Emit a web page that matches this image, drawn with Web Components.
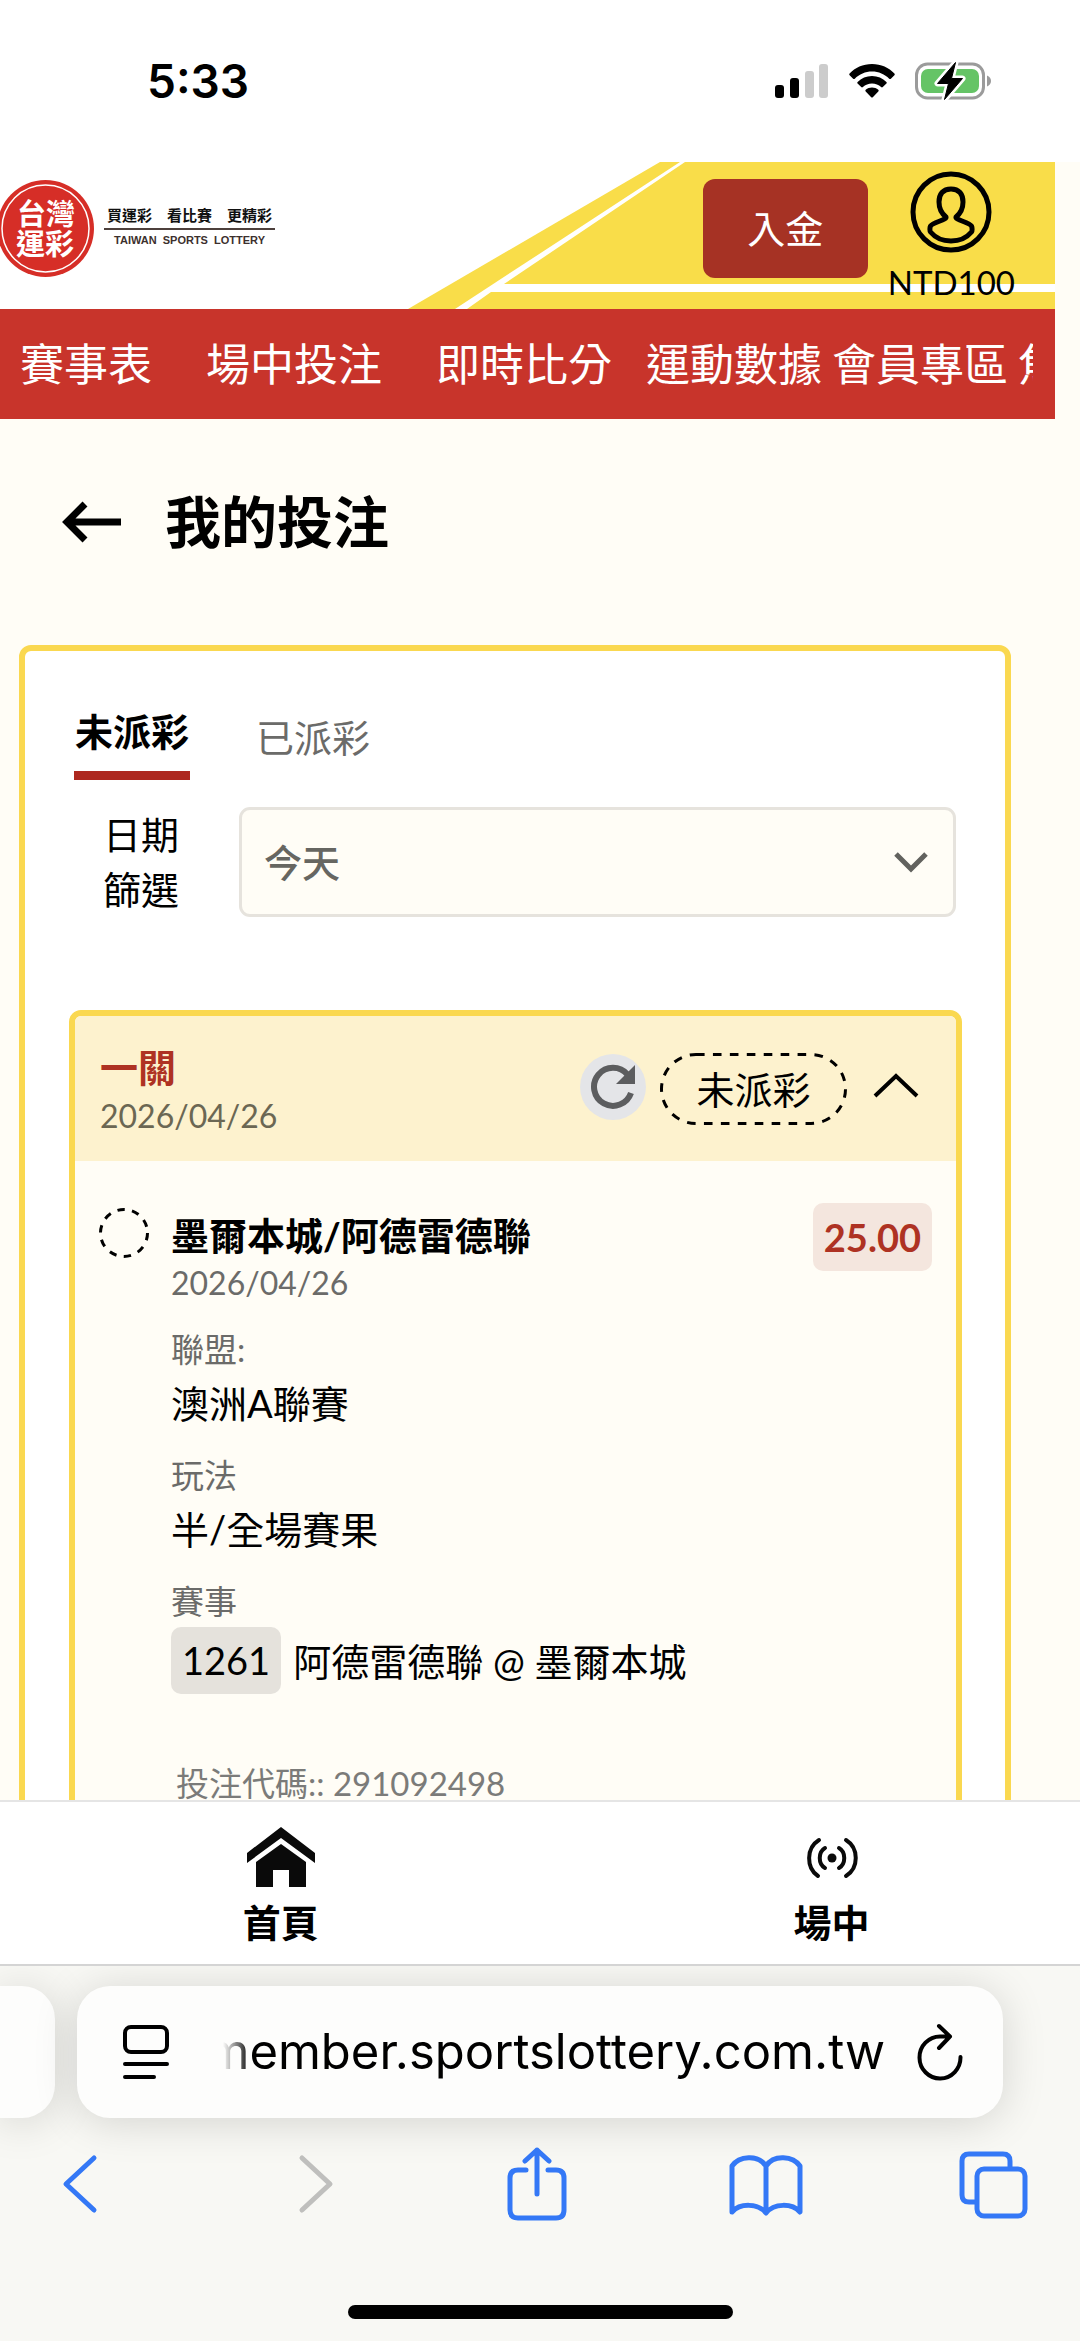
<!DOCTYPE html>
<html lang="zh-Hant">
<head>
<meta charset="utf-8">
<meta name="viewport" content="width=device-width, initial-scale=1">
<title>我的投注 - 台灣運彩</title>
<style>
  :root {
    --cream: #fffdf6;
    --gold: #fad850;
    --yellow: #f9dd49;
    --red: #c8342b;
    --brick: #a63224;
    --muted: #6b6b69;
    --blue: #3478f6;
    --text: 38px;
    --label: 33px;
    --date: 32px;
  }
  * { box-sizing: border-box; }
  body {
    margin: 0;
    height: 100vh;
    display: flex;
    flex-direction: column;
    overflow: hidden;
    background: var(--cream);
    color: #000;
    font-family: Lato, "Noto Sans CJK TC", sans-serif;
    font-size: var(--text);
  }
  main { flex: 1; min-height: 0; overflow: hidden; }
</style>
</head>
<body>
<status-bar time="5:33"></status-bar>
<main>
  <site-header balance="NTD100"></site-header>
  <site-nav></site-nav>
  <page-title>我的投注</page-title>
  <bets-panel>
    <bet-ticket name="一關" date="2026/04/26" status="未派彩">
      <bet-leg name="墨爾本城/阿德雷德聯" date="2026/04/26" odds="25.00">
        <bet-field label="聯盟:">澳洲A聯賽</bet-field>
        <bet-field label="玩法">半/全場賽果</bet-field>
        <bet-field label="賽事" code="1261">阿德雷德聯 @ 墨爾本城</bet-field>
      </bet-leg>
      <span slot="code">投注代碼:: 291092498</span>
    </bet-ticket>
  </bets-panel>
</main>
<tab-bar></tab-bar>
<browser-bar url="member.sportslottery.com.tw"></browser-bar>

<script>
const base = `<style>
  *, *::before { box-sizing: border-box; }
  button, select { font: inherit; color: inherit; background: none; border: 0; padding: 0; margin: 0; }
  a { color: inherit; text-decoration: none; }
  svg { display: block; flex: none; }
  h1, h2, h3, p, dl, dd, ul { margin: 0; padding: 0; font-weight: inherit; font-size: inherit; }
  ul { list-style: none; }
</style>`;

function define(name, render) {
  customElements.define(name, class extends HTMLElement {
    connectedCallback() {
      if (this.shadowRoot) return;
      this.attachShadow({ mode: 'open' }).innerHTML = base + render(this);
    }
  });
}

define('status-bar', el => `<style>
  :host { display: flex; align-items: center; justify-content: space-between; height: 162px; padding: 0 89px 0 147px;
    background: #fff; font-family: Inter, sans-serif; font-weight: 600; font-size: 46px; }
  .icons { display: flex; align-items: center; gap: 20px; }
</style>
<time>${el.getAttribute('time')}</time>
<div class="icons">
  <svg width="54" height="36" viewBox="0 0 54 36" aria-label="signal"><g>
    <rect x="0" y="22" width="9" height="13" rx="3"/><rect x="15" y="15" width="9" height="20" rx="3"/>
    <rect x="30" y="8" width="9" height="27" rx="3" fill="#ccc"/><rect x="44" y="1" width="9" height="34" rx="3" fill="#ccc"/></g></svg>
  <svg width="46" height="36" viewBox="0 0 46 36" aria-label="wifi">
    <path d="M23 1C14 1 6 4.600 0.600 10.500c-.5.500-.5 1.200 0 1.700l3.500 3.500c.5.500 1.200.5 1.700 0C10.300 11.200 16.300 8.500 23 8.500s12.700 2.700 17.200 7.200c.5.500 1.200.5 1.700 0l3.500-3.500c.5-.5.5-1.200 0-1.700C40 4.600 32 1 23 1z"/>
    <path d="M23 13c-5.600 0-10.700 2.200-14.400 5.900-.5.500-.5 1.200 0 1.700l3.600 3.500c.5.500 1.200.5 1.700 0 2.400-2.200 5.600-3.600 9.100-3.600s6.700 1.400 9.100 3.600c.5.500 1.200.5 1.700 0l3.600-3.500c.5-.5.5-1.200 0-1.700C33.700 15.200 28.600 13 23 13z"/>
    <path d="M23 24.500c-2.400 0-4.600.9-6.300 2.300-.5.500-.5 1.200 0 1.700l5.500 5.700c.5.500 1.100.5 1.600 0l5.500-5.700c.5-.5.5-1.200 0-1.700-1.700-1.400-3.900-2.300-6.300-2.300z"/></svg>
  <svg width="76" height="40" viewBox="0 0 76 40" aria-label="battery">
    <rect x="1.500" y="3" width="67" height="34" rx="11" fill="none" stroke="#9b9b9b" stroke-width="3"/>
    <rect x="6" y="8" width="58" height="24" rx="7" fill="#65c466"/>
    <path d="M72 14.500c2.600 1 4 3 4 5.500s-1.400 4.500-4 5.500z" fill="#9b9b9b"/>
    <path d="M40.500 1.500L22.500 22.500h11L29.500 38.500 47.500 17.500H36.500z" stroke="#fff" stroke-width="6" stroke-linejoin="round"/>
    <path d="M40.500 1.500L22.500 22.500h11L29.500 38.500 47.500 17.500H36.500z" stroke="#000" stroke-width="1" stroke-linejoin="round"/></svg>
</div>`);

define('site-header', el => `<style>
  :host { display: flex; justify-content: space-between; height: 147px; margin-right: 25px; background: #fff; position: relative; overflow: hidden; }
  .art { position: absolute; right: 0; top: 0; }
  .brand { display: flex; align-items: center; gap: 10px; margin: -14px 0 0 -3px; }
  .slogan { display: flex; flex-direction: column; align-items: center; color: #111; padding-bottom: 4px; }
  .zh { font-weight: 700; font-size: 15px; line-height: 26px; border-bottom: 2px solid #4d403c; padding: 0 3px; white-space: pre; }
  .en { font: 700 11px/21px "Liberation Sans", sans-serif; color: #3c302d; white-space: pre; }
  .account { position: relative; display: flex; align-items: flex-start; gap: 20px; padding-right: 40px; }
  .deposit { width: 165px; height: 99px; margin-top: 17px; padding-bottom: 4px; border-radius: 12px; background: var(--brick); color: #fff; }
  .user { display: flex; flex-direction: column; align-items: center; padding-top: 9px; gap: 8px; font-size: 33px; line-height: 42px; }
</style>
<svg class="art" width="647" height="147" viewBox="408 162 647 147" fill="#f9dd49" aria-hidden="true">
  <path d="M408 309L660 162h20L455 309z"/><path d="M685 162h370v122H504z"/><path d="M491 292h564v17H467z"/></svg>
<a class="brand" href="#" aria-label="台灣運彩">
  <svg width="97" height="97" viewBox="0 0 97 97" font-family="Noto Sans CJK TC, sans-serif" font-weight="700" font-size="29" fill="#fff">
    <circle cx="48.500" cy="48.500" r="48.500" fill="#d62e27"/>
    <circle cx="48.500" cy="48.500" r="43.500" fill="none" stroke="#fff" stroke-width="1.500"/>
    <text x="20" y="45">台灣</text><text x="19" y="75">運彩</text></svg>
  <span class="slogan"><span class="zh">買運彩　看比賽　更精彩</span><span class="en">TAIWAN  SPORTS  LOTTERY</span></span>
</a>
<div class="account">
  <button class="deposit">入金</button>
  <a class="user" href="#"><svg width="82" height="82" viewBox="0 0 82 82" fill="none" stroke="#000">
    <circle cx="41" cy="41" r="38" stroke-width="5"/>
    <path d="M36 46c-5-4-7-9-7-15 0-8 4-13 12-13s12 5 12 13c0 6-2 11-7 15-1 3 13 5 15.500 9 .8 1.500.8 5 0 6-5 6-12 9-20.500 9s-15.500-3-20.500-9c-.8-1-.8-4.500 0-6C23 51 37 49 36 46z" stroke-width="5" stroke-linejoin="round"/></svg>
    <span>${el.getAttribute('balance')}</span></a>
</div>`);

define('site-nav', () => `<style>
  :host { display: block; margin-right: 25px; padding: 0 22px 0 20px; background: var(--red); color: #fff; }
  ul { display: flex; overflow: hidden; gap: 10px; font-size: 44px; line-height: 110px; white-space: nowrap; }
  .wide { padding-right: 44px; }
  .mid { padding-right: 24px; }
</style>
<nav><ul>
  <li class="wide"><a href="#">賽事表</a></li><li class="wide"><a href="#">場中投注</a></li><li class="mid"><a href="#">即時比分</a></li>
  <li><a href="#">運動數據</a></li><li><a href="#">會員專區</a></li><li><a href="#">焦點</a></li>
</ul></nav>`);

define('page-title', () => `<style>
  :host { display: flex; align-items: center; gap: 43px; height: 206px; padding-left: 62px; }
  h1 { font-size: 56px; font-weight: 700; line-height: 80px; }
</style>
<button aria-label="返回"><svg width="60" height="42" viewBox="0 0 60 42" fill="none" stroke="#000" stroke-width="7">
  <path d="M59 21H6M23 3L5 21l18 18"/></svg></button>
<h1><slot></slot></h1>`);

define('bets-panel', () => `<style>
  :host { display: block; margin: 20px 69px 0 19px; border: 6px solid var(--gold); border-radius: 12px; background: #fff; padding: 50px 43px 60px 44px; }
  .tabs { display: flex; align-items: flex-start; gap: 66px; padding: 0 5px; }
  .tabs button { display: block; line-height: 60px; color: var(--muted); padding: 6px 0 0; }
  .tabs .on { color: #000; font-weight: 700; border-bottom: 9px solid #ad281f; padding: 0 1px 10px; }
  .filter { display: flex; align-items: center; gap: 60px; padding: 27px 6px 93px 34px; }
  label { width: 76px; line-height: 55px; text-align: right; flex: none; }
  .box { flex: 1; display: flex; align-items: center; position: relative; }
  select { appearance: none; width: 100%; height: 110px; border: 3px solid #e6e3dd; border-radius: 11px; background: var(--cream); padding: 0 22px; font-weight: 500; color: #666661; }
  .box svg { position: absolute; right: 27px; pointer-events: none; }
</style>
<div class="tabs" role="tablist"><button class="on" role="tab" aria-selected="true">未派彩</button><button role="tab" aria-selected="false">已派彩</button></div>
<div class="filter"><label for="d">日期篩選</label>
  <div class="box"><select id="d"><option>今天</option></select>
  <svg width="36" height="24" viewBox="0 0 36 24" fill="none" stroke="#62625e" stroke-width="5"><path d="M3 4l15 15L33 4"/></svg></div></div>
<slot></slot>`);

define('bet-ticket', el => `<style>
  :host { display: block; border: 6px solid var(--gold); border-radius: 12px; background: var(--cream); overflow: hidden; }
  header { display: flex; align-items: center; height: 145px; padding: 0 37px 0 25px; background: #fdf2ce; }
  .name { flex: 1; }
  h2 { font-weight: 700; line-height: 54px; color: #ae3223; }
  time { display: block; font-size: var(--date); line-height: 44px; color: #6b6753; }
  .refresh { width: 66px; height: 66px; border-radius: 50%; background: #e4e5e8; display: grid; place-items: center; margin: 0 14px 4px 0; }
  .status { position: relative; width: 187px; text-align: center; line-height: 72px; margin-right: 26px; }
  .status svg { position: absolute; inset: 0; }
  .fold { margin-bottom: 8px; }
  .code { padding: 64px 101px 40px; font-size: var(--label); line-height: 50px; color: #7b7b79; }
</style>
<header>
  <div class="name"><h2>${el.getAttribute('name')}</h2><time>${el.getAttribute('date')}</time></div>
  <button class="refresh" aria-label="重新整理"><svg width="46" height="46" viewBox="0 0 46 46">
    <path d="M37.500 10.500A19 19 0 1 0 41 29" fill="none" stroke="#5c5d5f" stroke-width="6"/><path d="M45 1v19H26z" fill="#5c5d5f"/></svg></button>
  <span class="status"><svg width="187" height="72" viewBox="0 0 187 72" fill="none" stroke="#000" stroke-width="3" aria-hidden="true">
    <rect x="1.500" y="1.500" width="184" height="69" rx="34.500" stroke-dasharray="8.600 8.330"/></svg>${el.getAttribute('status')}</span>
  <button class="fold" aria-label="收合"><svg width="46" height="26" viewBox="0 0 46 26" fill="none" stroke="#000" stroke-width="4"><path d="M2 24L23 4l21 20"/></svg></button>
</header>
<slot></slot>
<div class="code"><slot name="code"></slot></div>`);

define('bet-leg', el => `<style>
  :host { display: grid; grid-template-columns: 50px 1fr auto; column-gap: 22px; padding: 42px 24px 0 24px; align-items: start; }
  .mark { margin-top: 5px; }
  h3 { font-weight: 700; line-height: 64px; }
  time { display: block; font-size: var(--date); line-height: 32px; color: var(--muted); padding-bottom: 8px; }
  .odds { padding: 0 11px; line-height: 68px; border-radius: 10px; background: #f4e6de; color: #ae3223; font-weight: 700; }
  dl { grid-column: 2 / 4; }
</style>
<svg class="mark" width="50" height="50" viewBox="0 0 50 50" fill="none" stroke="#000" stroke-width="3"><circle cx="25" cy="25" r="23.500" stroke-dasharray="7.400 7.370"/></svg>
<div><h3>${el.getAttribute('name')}</h3><time>${el.getAttribute('date')}</time></div>
<span class="odds">${el.getAttribute('odds')}</span>
<dl><slot></slot></dl>`);

define('bet-field', el => {
  const code = el.getAttribute('code');
  return `<style>
  :host { display: block; padding-top: 18px; }
  .label { font-size: var(--label); line-height: 48px; color: var(--muted); }
  .value { display: flex; align-items: center; gap: 12px; line-height: 60px; }
  .code { padding: 0 11px; line-height: 67px; border-radius: 10px; background: #e5e2dc; }
  .value:has(.code) { padding-top: 2px; }
</style>
<div class="label">${el.getAttribute('label')}</div>
<div class="value">${code ? `<span class="code">${code}</span>` : ''}<span><slot></slot></span></div>`;
});

define('tab-bar', () => `<style>
  :host { display: grid; grid-template-columns: 52% 50%; height: 166px; flex: none; overflow: hidden; background: #fff;
    border: solid #e5e5e5; border-width: 2px 0; border-bottom-color: #d4d4d4; font-weight: 700; }
  a { display: flex; flex-direction: column; align-items: center; padding-top: 25px; gap: 5px; line-height: 56px; }
</style>
<a href="#"><svg width="68" height="62" viewBox="0 0 68 62" fill="#0a0a0a">
  <path d="M34 0l34 26v10L34 11 0 36V26z"/><path d="M34 17l25 18v25H42V43H26v17H9V35z"/></svg>首頁</a>
<a href="#"><svg width="54" height="62" viewBox="0 0 54 62" fill="none" stroke="#0a0a0a" stroke-width="4" stroke-linecap="round">
  <circle cx="27" cy="31" r="4.500" fill="#0a0a0a" stroke="none"/>
  <path d="M20 21c-7 4-7 16 0 20M34 21c7 4 7 16 0 20M14 13c-13 8-13 28-1 36M41 13c13 8 13 28 0 36"/></svg>場中</a>`);

define('browser-bar', el => `<style>
  :host { display: flex; flex-direction: column; height: 375px; flex: none; overflow: hidden; background: #f8f8f4; }
  .pages { display: flex; gap: 22px; padding: 20px 77px 0 0; }
  .prev, .address { height: 132px; background: #fdfdfc; box-shadow: 0 4px 44px #00000026; }
  .prev { width: 55px; flex: none; border-radius: 0 33px 33px 0; }
  .address { flex: 1; min-width: 0; display: flex; align-items: center; border-radius: 33px; padding: 0 40px 0 45px; }
  .url { flex: 1; min-width: 0; margin: 0 32px 0 53px; display: flex; justify-content: flex-end; overflow: hidden;
    font: 400 49px/70px Inter, sans-serif; mask-image: linear-gradient(90deg, transparent, #000 28px); }
  .tools { display: flex; justify-content: space-between; align-items: center; padding: 28px 46px 0 40px; color: var(--blue); }
  .tools button { width: 80px; display: flex; justify-content: center; }
  .tools svg { fill: none; stroke: currentColor; stroke-width: 5; stroke-linecap: round; stroke-linejoin: round; }
  .tools :disabled { color: #bfbfbd; }
  .home { width: 385px; height: 14px; border-radius: 7px; background: #000; margin: auto auto 22px; }
</style>
<div class="pages"><div class="prev"></div>
  <div class="address">
    <button aria-label="頁面選單"><svg width="48" height="56" viewBox="0 0 48 56" fill="none" stroke="#000" stroke-width="4" stroke-linecap="round">
      <rect x="3" y="3" width="42" height="25" rx="6"/><path d="M3 40h42M3 53h29"/></svg></button>
    <span class="url"><span>${el.getAttribute('url')}</span></span>
    <button aria-label="重新載入"><svg width="46" height="58" viewBox="0 0 46 58" fill="none" stroke="#000" stroke-width="4" stroke-linecap="round" stroke-linejoin="round">
      <path d="M43.500 34A20.500 21 0 1 1 23 13.500h10M22 3l11 10.500L22 25"/></svg></button>
  </div></div>
<div class="tools">
  <button aria-label="上一頁"><svg width="40" height="76" viewBox="0 0 40 76"><path d="M34 12L6 38l28 26"/></svg></button>
  <button aria-label="下一頁" disabled><svg width="54" height="76" viewBox="-14 0 54 76"><path d="M6 12l28 26L6 64"/></svg></button>
  <button aria-label="分享"><svg width="60" height="76" viewBox="0 0 60 76"><path d="M19 24H11q-8 0-8 8v32q0 8 8 8h38q8 0 8-8V32q0-8-8-8h-8M30 48V4M18 15L30 4l12 11"/></svg></button>
  <button aria-label="書籤"><svg width="76" height="76" viewBox="0 0 76 76"><path d="M38 20C30 8 11 10 4 20v46c8-9 26-9 34 1 8-10 26-10 34-1V20C65 10 46 8 38 20zM38 20v46"/></svg></button>
  <button aria-label="分頁"><svg width="72" height="76" viewBox="0 0 72 76"><rect x="19" y="23" width="48" height="47" rx="7"/><path d="M18 56h-7q-7 0-7-7V15q0-7 7-7h34q7 0 7 7v7"/></svg></button>
</div>
<div class="home"></div>`);
</script>
</body>
</html>
